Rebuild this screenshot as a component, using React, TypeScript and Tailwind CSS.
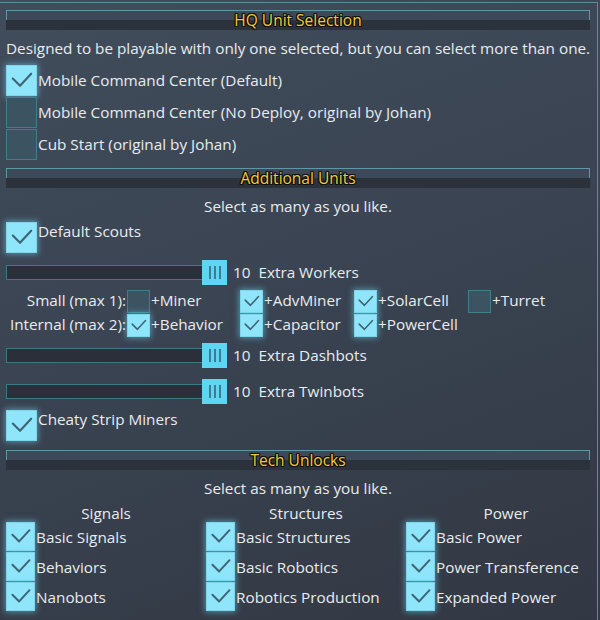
import React from "react";

const FONT = "font-['Open_Sans','Noto_Sans',sans-serif]";
const TXT = "text-[15.3px] leading-[20px] text-[#e8ecef]";

function Check({ size }: { size: number }) {
  return (
    <svg width={size} height={size} viewBox="0 0 30 30" className="block">
      <polyline
        points="6,13 13.5,20.5 25,8"
        fill="none"
        stroke="#3f6575"
        strokeWidth="2.2"
        strokeLinecap="round"
        strokeLinejoin="round"
      />
    </svg>
  );
}

function Box({ checked, size }: { checked: boolean; size: "lg" | "md" | "sm" }) {
  const dim = size === "lg" ? "w-[31px] h-[31px]" : size === "md" ? "w-[29px] h-[29px]" : "w-[23px] h-[23px]";
  const px = size === "lg" ? 31 : size === "md" ? 29 : 23;
  if (checked) {
    return (
      <div className={`${dim} shrink-0 bg-[#8fe6fb] border border-[#7fd4ea] shadow-[0_0_6px_1px_rgba(110,215,245,0.55)] flex items-center justify-center`}>
        <Check size={px - 2} />
      </div>
    );
  }
  return <div className={`${dim} shrink-0 bg-[#3c5362] border border-[#3f7e8e]`} />;
}

function Header({ title }: { title: string }) {
  return (
    <div className="grid h-[20px]">
      <div className="col-start-1 row-start-1 flex flex-col">
        <div className="h-[10px] bg-[#3d4958] border-t border-x border-[#5e97a6]" />
        <div className="h-[10px] bg-[#2c323c]" />
      </div>
      <div className="col-start-1 row-start-1 flex items-center justify-center text-[15.5px] leading-[20px] -mt-[1px] text-[#f2c93a] [text-shadow:1px_0_0_#111,-1px_0_0_#111,0_1px_0_#111,0_-1px_0_#111,1px_1px_0_#111,-1px_-1px_0_#111,1px_-1px_0_#111,-1px_1px_0_#111]">
        {title}
      </div>
    </div>
  );
}

function Slider({ label, mt }: { label: string; mt: string }) {
  return (
    <div className={`flex items-center ${mt}`}>
      <div className="w-[198px] h-[15px] bg-[#2a2f39] border border-[#3d7888]" />
      <div className="w-[25px] h-[25px] -ml-[2px] bg-[#5dd5f3] flex items-center justify-center gap-[3px]">
        <div className="w-[2px] h-[13px] bg-[#3a7d93]" />
        <div className="w-[2px] h-[13px] bg-[#3a7d93]" />
        <div className="w-[2px] h-[13px] bg-[#3a7d93]" />
      </div>
      <div className={`ml-[6px] -mt-[1px] ${TXT} whitespace-pre`}>{label}</div>
    </div>
  );
}

function SmallItem({ checked, label }: { checked: boolean; label: string }) {
  return (
    <div className="flex items-start">
      <Box checked={checked} size="sm" />
      <span className={`ml-[1px] ${TXT} whitespace-nowrap`}>{label}</span>
    </div>
  );
}

function TechCol({ title, items }: { title: string; items: string[] }) {
  return (
    <div className="w-[200px] shrink-0 flex flex-col">
      <div className="text-center text-[15.3px] leading-[18px] text-[#e8ecef]">{title}</div>
      <div className="flex flex-col gap-[1px]">
        {items.map((it) => (
          <div key={it} className="flex items-center h-[29px]">
            <Box checked size="md" />
            <span className={`ml-[1px] ${TXT} whitespace-nowrap`}>{it}</span>
          </div>
        ))}
      </div>
    </div>
  );
}

export default function App() {
  return (
    <div className={`w-[600px] h-[620px] overflow-hidden bg-[linear-gradient(160deg,#414d5c_0%,#3a4452_45%,#323843_100%)] ${FONT}`}>
      <div className="mt-[2px] w-[598px] h-[618px] border-t border-r border-[#5b8d9b] pt-[7px] pl-[6px] pr-[7px]">
        <Header title="HQ Unit Selection" />
        <div className={`mt-[8px] ${TXT} whitespace-nowrap`}>
          Designed to be playable with only one selected, but you can select more than one.
        </div>
        <div className="mt-[7px] flex flex-col gap-[1px]">
          {[
            { c: true, t: "Mobile Command Center (Default)" },
            { c: false, t: "Mobile Command Center (No Deploy, original by Johan)" },
            { c: false, t: "Cub Start (original by Johan)" },
          ].map((r) => (
            <div key={r.t} className="flex items-center h-[31px]">
              <Box checked={r.c} size="lg" />
              <span className={`ml-[1px] -mt-[2px] ${TXT} whitespace-nowrap`}>{r.t}</span>
            </div>
          ))}
        </div>

        <div className="mt-[8px]">
          <Header title="Additional Units" />
        </div>
        <div className={`mt-[8px] text-center ${TXT}`}>Select as many as you like.</div>
        <div className="mt-[6px] flex items-start">
          <Box checked size="lg" />
          <span className={`ml-[1px] -mt-[1px] ${TXT}`}>Default Scouts</span>
        </div>
        <Slider label="10  Extra Workers" mt="mt-[7px]" />

        <div className="mt-[5px] grid grid-cols-[121px_113px_114px_114px_auto] text-[15.3px] leading-[20px] text-[#e8ecef]">
          <div className="text-right pr-[1px] whitespace-nowrap">Small (max 1):</div>
          <SmallItem checked={false} label="+Miner" />
          <SmallItem checked label="+AdvMiner" />
          <SmallItem checked label="+SolarCell" />
          <SmallItem checked={false} label="+Turret" />
          <div className="mt-[1px] text-right pr-[1px] whitespace-nowrap">Internal (max 2):</div>
          <div className="mt-[1px]"><SmallItem checked label="+Behavior" /></div>
          <div className="mt-[1px]"><SmallItem checked label="+Capacitor" /></div>
          <div className="mt-[1px]"><SmallItem checked label="+PowerCell" /></div>
          <div />
        </div>

        <Slider label="10  Extra Dashbots" mt="mt-[6px]" />
        <Slider label="10  Extra Twinbots" mt="mt-[11px]" />

        <div className="mt-[6px] flex items-start">
          <Box checked size="lg" />
          <span className={`ml-[1px] -mt-[1px] ${TXT}`}>Cheaty Strip Miners</span>
        </div>

        <div className="mt-[9px]">
          <Header title="Tech Unlocks" />
        </div>
        <div className={`mt-[8px] text-center ${TXT}`}>Select as many as you like.</div>
        <div className="mt-[6px] flex">
          <TechCol title="Signals" items={["Basic Signals", "Behaviors", "Nanobots"]} />
          <TechCol title="Structures" items={["Basic Structures", "Basic Robotics", "Robotics Production"]} />
          <TechCol title="Power" items={["Basic Power", "Power Transference", "Expanded Power"]} />
        </div>
      </div>
    </div>
  );
}
